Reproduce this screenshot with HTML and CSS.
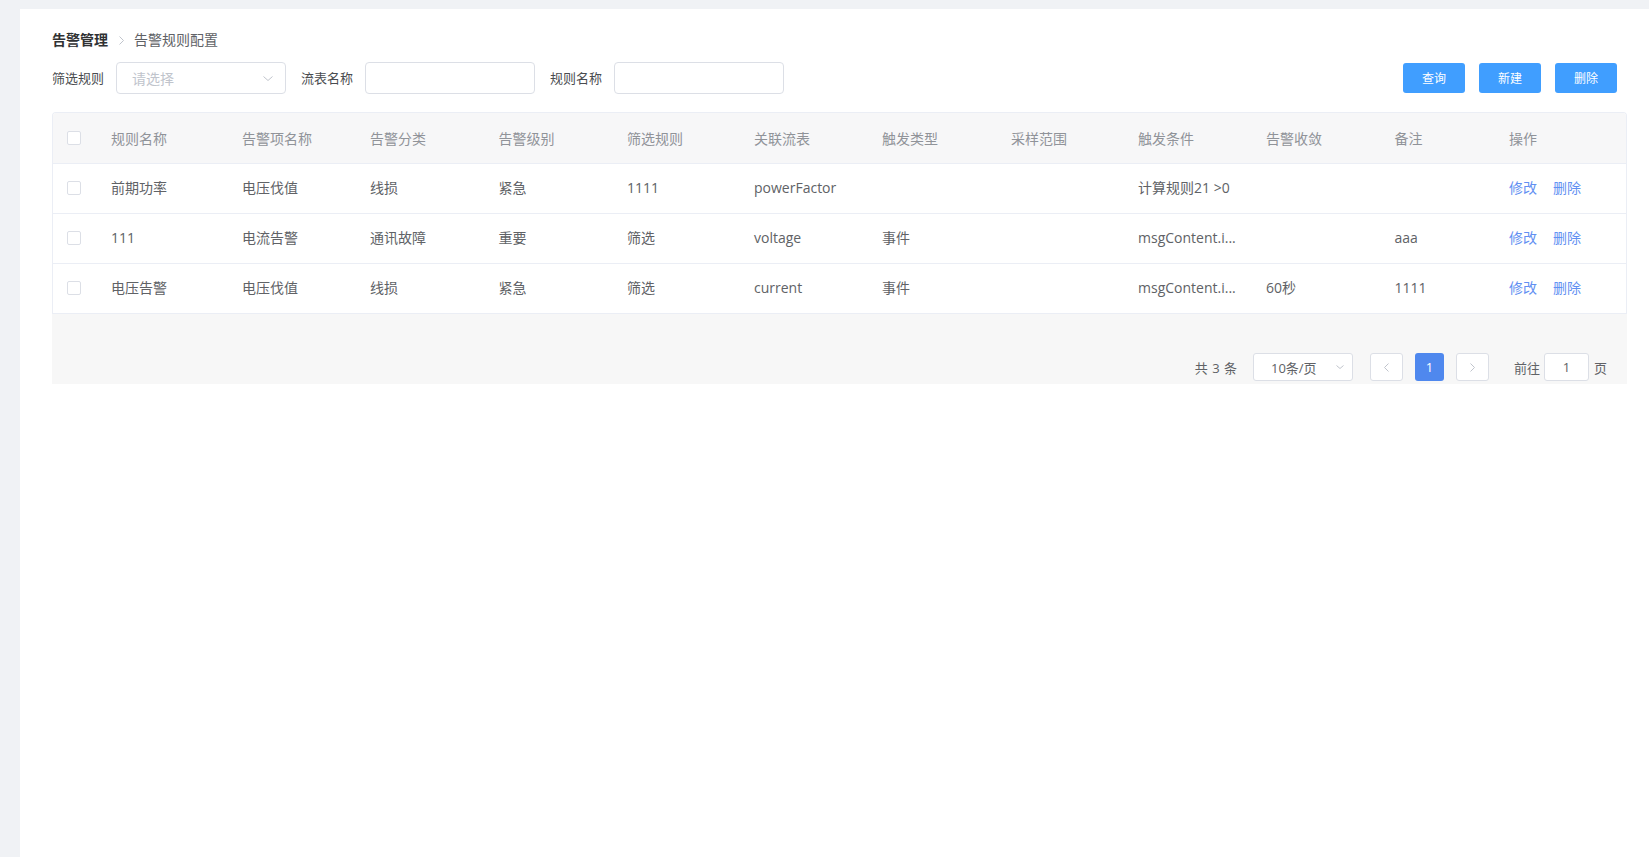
FILE: index.html
```html
<!DOCTYPE html>
<html lang="zh-CN">
<head>
<meta charset="utf-8">
<title>告警规则配置</title>
<link rel="stylesheet" href="styles.css">
</head>
<body>
<div class="panel">
  <nav class="breadcrumb">
    <span class="crumb-root">告警管理</span>
    <svg class="crumb-sep" viewBox="0 0 5 9" width="5" height="9"><path d="M0.5 0.5 L4.5 4.5 L0.5 8.5" fill="none" stroke="#c0c4cc" stroke-width="1"/></svg>
    <span class="crumb-current">告警规则配置</span>
  </nav>

  <div class="toolbar">
    <div class="filters">
      <span class="filter-label">筛选规则</span>
      <div class="select">
        <span class="placeholder">请选择</span>
        <svg class="select-arrow" viewBox="0 0 10 5" width="10" height="5"><path d="M0.5 0.5 L5 4.5 L9.5 0.5" fill="none" stroke="#c0c4cc" stroke-width="1"/></svg>
      </div>
      <span class="filter-label">流表名称</span>
      <input class="text-input" type="text">
      <span class="filter-label">规则名称</span>
      <input class="text-input" type="text">
    </div>
    <div class="actions">
      <button class="btn">查询</button>
      <button class="btn">新建</button>
      <button class="btn">删除</button>
    </div>
  </div>

  <div class="table">
    <div class="row head">
      <div class="cell check"><span class="checkbox"></span></div>
      <div class="cell">规则名称</div>
      <div class="cell">告警项名称</div>
      <div class="cell">告警分类</div>
      <div class="cell">告警级别</div>
      <div class="cell">筛选规则</div>
      <div class="cell">关联流表</div>
      <div class="cell">触发类型</div>
      <div class="cell">采样范围</div>
      <div class="cell">触发条件</div>
      <div class="cell">告警收敛</div>
      <div class="cell">备注</div>
      <div class="cell">操作</div>
    </div>
    <div class="row">
      <div class="cell check"><span class="checkbox"></span></div>
      <div class="cell">前期功率</div>
      <div class="cell">电压伐值</div>
      <div class="cell">线损</div>
      <div class="cell">紧急</div>
      <div class="cell">1111</div>
      <div class="cell">powerFactor</div>
      <div class="cell"></div>
      <div class="cell"></div>
      <div class="cell">计算规则21 &gt;0</div>
      <div class="cell"></div>
      <div class="cell"></div>
      <div class="cell"><a class="link">修改</a><a class="link">删除</a></div>
    </div>
    <div class="row">
      <div class="cell check"><span class="checkbox"></span></div>
      <div class="cell">111</div>
      <div class="cell">电流告警</div>
      <div class="cell">通讯故障</div>
      <div class="cell">重要</div>
      <div class="cell">筛选</div>
      <div class="cell">voltage</div>
      <div class="cell">事件</div>
      <div class="cell"></div>
      <div class="cell">msgContent.i...</div>
      <div class="cell"></div>
      <div class="cell">aaa</div>
      <div class="cell"><a class="link">修改</a><a class="link">删除</a></div>
    </div>
    <div class="row">
      <div class="cell check"><span class="checkbox"></span></div>
      <div class="cell">电压告警</div>
      <div class="cell">电压伐值</div>
      <div class="cell">线损</div>
      <div class="cell">紧急</div>
      <div class="cell">筛选</div>
      <div class="cell">current</div>
      <div class="cell">事件</div>
      <div class="cell"></div>
      <div class="cell">msgContent.i...</div>
      <div class="cell">60秒</div>
      <div class="cell">1111</div>
      <div class="cell"><a class="link">修改</a><a class="link">删除</a></div>
    </div>
  </div>

  <div class="table-footer">
    <div class="pagination">
      <span class="total">共 3 条</span>
      <div class="page-size">
        <span>10条/页</span>
        <svg class="size-arrow" viewBox="0 0 8 4" width="8" height="4"><path d="M0.5 0.5 L4 3.5 L7.5 0.5" fill="none" stroke="#c0c4cc" stroke-width="1"/></svg>
      </div>
      <button class="pager-btn"><svg viewBox="0 0 5 9" width="5" height="9"><path d="M4.5 0.5 L0.5 4.5 L4.5 8.5" fill="none" stroke="#c0c4cc" stroke-width="1"/></svg></button>
      <span class="pager-num">1</span>
      <button class="pager-btn"><svg viewBox="0 0 5 9" width="5" height="9"><path d="M0.5 0.5 L4.5 4.5 L0.5 8.5" fill="none" stroke="#c0c4cc" stroke-width="1"/></svg></button>
      <span class="jump-label">前往</span>
      <input class="jump-input" type="text" value="1">
      <span class="jump-unit">页</span>
    </div>
  </div>
</div>
</body>
</html>
```

FILE: styles.css
```css
html, body {
  margin: 0;
  padding: 0;
}

body {
  background: #f0f2f5;
  font-family: "Open Sans", "Noto Sans CJK SC", sans-serif;
  font-size: 14px;
  color: #606266;
}

.panel {
  margin: 9px 0 0 20px;
  background: #fff;
  min-height: 848px;
  padding: 21px 22px 0 32px;
  box-sizing: border-box;
}

/* breadcrumb */
.breadcrumb {
  display: flex;
  align-items: center;
  height: 20px;
  line-height: 20px;
  font-size: 14px;
}

.crumb-root {
  color: #303133;
  font-weight: 700;
}

.crumb-sep {
  margin: 0 10px 0 11px;
}

.crumb-current {
  color: #606266;
}

/* toolbar */
.toolbar {
  display: flex;
  justify-content: space-between;
  align-items: center;
  margin-top: 12px;
  height: 32px;
  padding-right: 10px;
}

.filters {
  display: flex;
  align-items: center;
}

.filter-label {
  font-size: 13px;
  color: #4a4c50;
  margin-right: 12px;
  line-height: 32px;
}

.filter-label:not(:first-child) {
  margin-left: 15px;
}

.select,
.text-input {
  width: 170px;
  height: 32px;
  box-sizing: border-box;
  border: 1px solid #dcdfe6;
  border-radius: 4px;
  background: #fff;
  margin: 0;
}

.select {
  display: flex;
  align-items: center;
  justify-content: space-between;
  padding: 0 12px 0 15px;
}

.placeholder {
  color: #c0c4cc;
  font-size: 14px;
}

.actions {
  display: flex;
  gap: 14px;
}

.btn {
  width: 62px;
  height: 30px;
  border: none;
  border-radius: 3px;
  background: #409eff;
  color: #fff;
  font-family: inherit;
  font-size: 12px;
  padding: 0;
}

/* table */
.table {
  margin-top: 18px;
  border: 1px solid #ebeef5;
  border-bottom: none;
  border-radius: 4px 4px 0 0;
  overflow: hidden;
}

.row {
  display: grid;
  grid-template-columns: 48px 131px 128px 128.5px 128.5px 127px 128px 129px 127px 128px 128.5px 114.5px 1fr;
  align-items: center;
  height: 50px;
  box-sizing: border-box;
  border-bottom: 1px solid #ebeef5;
  font-size: 14px;
  color: #606266;
  background: #fff;
}

.row.head {
  height: 51px;
  background: #f7f7f8;
  color: #909399;
}

.cell {
  padding: 0 10px;
  line-height: 23px;
  white-space: nowrap;
  overflow: hidden;
  text-overflow: ellipsis;
}

.row:not(.head) .cell {
  padding-bottom: 3px;
}

.cell.check,
.row:not(.head) .cell.check {
  display: flex;
  padding: 0 0 1px 14px;
}

.checkbox {
  width: 14px;
  height: 14px;
  box-sizing: border-box;
  border: 1px solid #dcdfe6;
  border-radius: 2px;
  background: #fff;
}

.link {
  color: #6290f2;
  margin-right: 16px;
  cursor: pointer;
}

/* footer + pagination */
.table-footer {
  display: flex;
  justify-content: flex-end;
  align-items: flex-end;
  height: 70px;
  padding: 0 20px 3px 0;
  box-sizing: border-box;
  background: #f7f7f7;
}

.pagination {
  display: flex;
  align-items: center;
  height: 28px;
  font-size: 13px;
  color: #606266;
}

.total {
  margin-right: 16px;
  word-spacing: 1px;
}

.page-size {
  display: flex;
  align-items: center;
  justify-content: space-between;
  width: 100px;
  height: 28px;
  box-sizing: border-box;
  border: 1px solid #dcdfe6;
  border-radius: 3px;
  background: #fff;
  padding: 0 8px 0 17px;
  margin-right: 17px;
}

.pager-btn {
  display: flex;
  align-items: center;
  justify-content: center;
  width: 33px;
  height: 28px;
  box-sizing: border-box;
  border: 1px solid #dcdfe6;
  border-radius: 3px;
  background: #fff;
  padding: 0;
}

.pager-num {
  display: flex;
  align-items: center;
  justify-content: center;
  width: 29px;
  height: 28px;
  margin: 0 12px;
  border-radius: 3px;
  background: #4f88ee;
  color: #fff;
}

.jump-label {
  margin-left: 25px;
}

.jump-input {
  width: 45px;
  height: 28px;
  box-sizing: border-box;
  margin: 0 5px 0 4px;
  border: 1px solid #dcdfe6;
  border-radius: 3px;
  background: #fff;
  text-align: center;
  font-family: inherit;
  font-size: 13px;
  color: #606266;
  padding: 0;
}
```
